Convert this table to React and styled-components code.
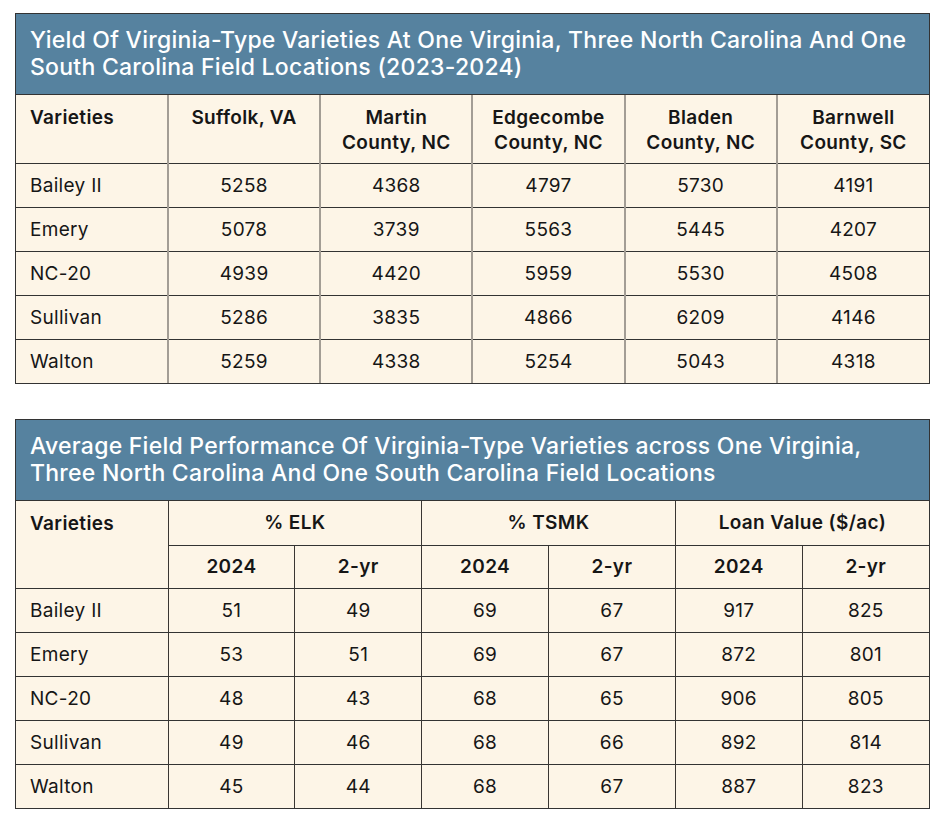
import React from "react";
import styled, { createGlobalStyle } from "styled-components";

const Global = createGlobalStyle`
  html, body { margin: 0; padding: 0; background: #ffffff; }
  body { font-family: Inter, "Noto Sans", sans-serif; color: #161616; }
`;

const Page = styled.div`
  width: 946px;
  padding: 13px 16px 0 15px;
  box-sizing: border-box;
  display: flex;
  flex-direction: column;
  gap: 35px;
`;

const Card = styled.div`
  border: 1px solid #333;
  background: #fdf5e7;
`;

const Title = styled.div`
  background: #56829f;
  color: #ffffff;
  font-size: 23px;
  letter-spacing: 0.25px;
  font-weight: 500;
  line-height: 27px;
  padding: 13px 10px 13px 14px;
  border-bottom: 1px solid #333;
`;

const Table = styled.table`
  width: 100%;
  border-collapse: collapse;
  table-layout: fixed;
`;

const Cell = styled.td`
  font-size: ${(p) => (p.$head ? 19 : 19)}px;
  letter-spacing: ${(p) => (p.$head ? 0.35 : 0.3)}px;
  line-height: 25px;
  font-weight: ${(p) => (p.$head ? 600 : 400)};
  text-align: ${(p) => (p.$left ? "left" : "center")};
  vertical-align: ${(p) => (p.$top ? "top" : "middle")};
  padding: ${(p) => (p.$left ? "0 14px" : "0 4px")};
  padding-top: ${(p) => (p.$top ? "10px" : "0")};
  height: ${(p) => p.$h || 43}px;
  box-sizing: border-box;
  border-top: 1px solid #333;
  border-left: ${(p) => (p.$soft ? "2px solid #a39d95" : "1px solid #3a3632")};
  &:first-child { border-left: none; }
  tr:first-child > & { border-top: none; }
`;

const SubHead = styled(Cell)`
  &:first-child { border-left: 1px solid #3a3632; }
`;

const yieldCols = ["Suffolk, VA", "Martin\nCounty, NC", "Edgecombe\nCounty, NC", "Bladen\nCounty, NC", "Barnwell\nCounty, SC"];
const yieldRows = [
  ["Bailey II", 5258, 4368, 4797, 5730, 4191],
  ["Emery", 5078, 3739, 5563, 5445, 4207],
  ["NC-20", 4939, 4420, 5959, 5530, 4508],
  ["Sullivan", 5286, 3835, 4866, 6209, 4146],
  ["Walton", 5259, 4338, 5254, 5043, 4318],
];

const perfRows = [
  ["Bailey II", 51, 49, 69, 67, 917, 825],
  ["Emery", 53, 51, 69, 67, 872, 801],
  ["NC-20", 48, 43, 68, 65, 906, 805],
  ["Sullivan", 49, 46, 68, 66, 892, 814],
  ["Walton", 45, 44, 68, 67, 887, 823],
];

const Lines = ({ text }) =>
  text.split("\n").map((t, i) => (
    <React.Fragment key={i}>
      {i > 0 && <br />}
      {t}
    </React.Fragment>
  ));

export default function App() {
  return (
    <>
      <Global />
      <Page>
        <Card>
          <Title>
            Yield Of Virginia-Type Varieties At One Virginia, Three North Carolina And One South Carolina Field Locations (2023-2024)
          </Title>
          <Table>
            <colgroup>
              <col style={{ width: "152px" }} />
            </colgroup>
            <tbody>
              <tr>
                <Cell $head $left $top $soft $h={68}>Varieties</Cell>
                {yieldCols.map((c) => (
                  <Cell key={c} $head $top $soft $h={68}>
                    <Lines text={c} />
                  </Cell>
                ))}
              </tr>
              {yieldRows.map((r) => (
                <tr key={r[0]}>
                  {r.map((v, i) => (
                    <Cell key={i} $left={i === 0} $soft $h={44}>{v}</Cell>
                  ))}
                </tr>
              ))}
            </tbody>
          </Table>
        </Card>
        <Card>
          <Title>
            Average Field Performance Of Virginia-Type Varieties across One Virginia, Three North Carolina And One South Carolina Field Locations
          </Title>
          <Table>
            <colgroup>
              <col style={{ width: "152px" }} />
            </colgroup>
            <tbody>
              <tr>
                <Cell $head $left $top rowSpan={2} $h={87}>Varieties</Cell>
                <Cell $head colSpan={2} $h={44}>% ELK</Cell>
                <Cell $head colSpan={2} $h={44}>% TSMK</Cell>
                <Cell $head colSpan={2} $h={44}>Loan Value ($/ac)</Cell>
              </tr>
              <tr>
                {["2024", "2-yr", "2024", "2-yr", "2024", "2-yr"].map((h, i) => (
                  <SubHead key={i} $head $h={43}>{h}</SubHead>
                ))}
              </tr>
              {perfRows.map((r) => (
                <tr key={r[0]}>
                  {r.map((v, i) => (
                    <Cell key={i} $left={i === 0} $h={44}>{v}</Cell>
                  ))}
                </tr>
              ))}
            </tbody>
          </Table>
        </Card>
      </Page>
    </>
  );
}
